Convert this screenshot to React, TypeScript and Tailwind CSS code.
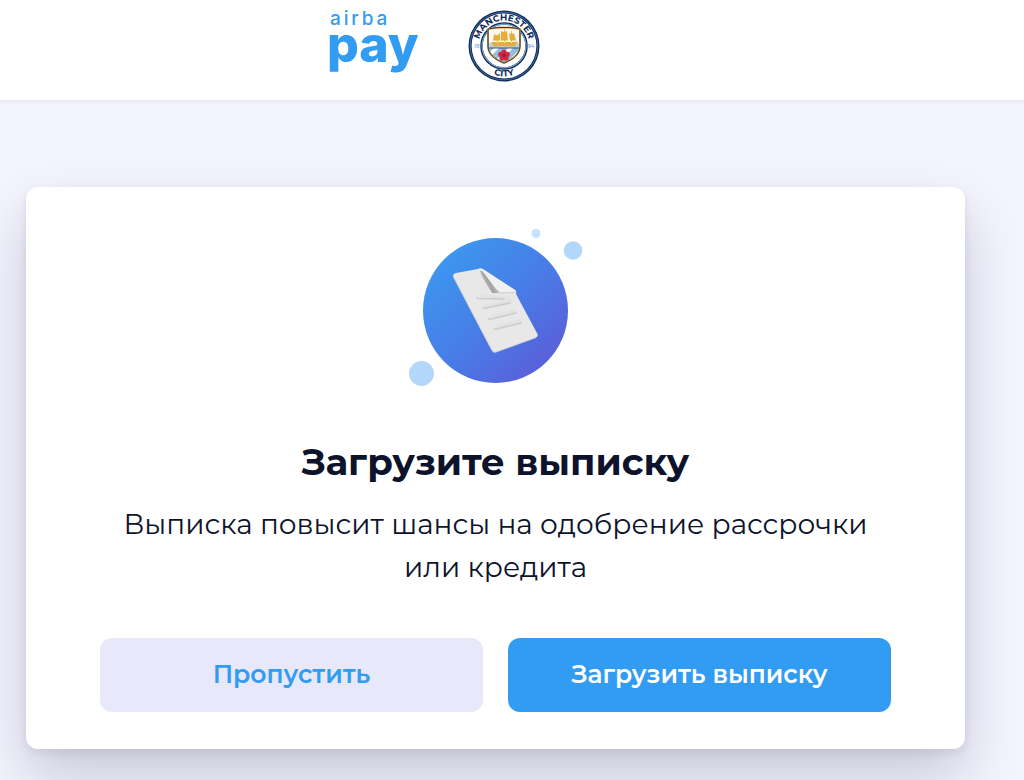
import type { ReactNode } from "react";

const shield = "M24 24q8-2 16-1.500q8-.5 16 1.500v17c0 8-6 13-16 17c-10-4-16-9-16-17z";

function AirbaPayLogo() {
  return (
    <div className="w-[94px] font-['Inter',sans-serif] text-[#329bf2]" role="img" aria-label="airba pay">
      <div className="text-[19px] leading-[18px] font-medium tracking-[0.15em]">airba</div>
      <div className="-ml-[3px] text-[50px] leading-[32px] font-extrabold">pay</div>
    </div>
  );
}

function ClubCrest() {
  return (
    <svg viewBox="4 5 72 72" className="size-[72px]" role="img" aria-label="Manchester City">
      <defs>
        <path id="crest-top" d="M14.500 41A25.500 25.500 0 1 1 65.500 41" />
        <path id="crest-bottom" d="M9.500 41A30.500 30.500 0 0 0 70.500 41" />
        <clipPath id="crest-shield">
          <path d={shield} />
        </clipPath>
      </defs>
      <circle cx="40" cy="41" r="35.500" fill="#0f2b5b" />
      <circle cx="40" cy="41" r="33.800" fill="none" stroke="#5585bb" strokeWidth="0.700" />
      <circle cx="40" cy="41" r="32.400" fill="#fff" />
      <circle cx="40" cy="41" r="22.500" fill="#fff" stroke="#0f2b5b" strokeWidth="2.500" />
      <circle cx="40" cy="41" r="22" fill="none" stroke="#8dbbe3" strokeWidth="1" />
      <g clipPath="url(#crest-shield)">
        <rect x="22" y="20" width="36" height="23" fill="#fbf8ef" />
        <rect x="22" y="38" width="36" height="5" fill="#b5d5ee" />
        <rect x="22" y="43" width="36" height="18" fill="#8fbfe6" />
        <path d="M22 51l8-8h5L22 56zM28 59l16-16h5L32 60zM38 62l20-20v6L42 64z" fill="#fff" />
        <path d="M22 43h36" stroke="#0f2b5b" strokeWidth="0.800" />
        <path
          d="M27 37l3 4h21l3-4.500-5 .5H31zM30 29q3 3 6-1v7.500h-7zM37 26q3 2 6 0l1 9.500h-7.500zM45 28q3 2 5 0l2 7.500h-6zM33 35h1v3h-1zM40 24h.8v14H40zM47 26h.8v12H47z"
          fill="#e5ae3c"
        />
        <path d="M28 41h24" stroke="#e5ae3c" strokeWidth="0.800" />
      </g>
      <path d={shield} fill="none" stroke="#d9a741" strokeWidth="2" />
      <path d={shield} fill="none" stroke="#0f2b5b" strokeWidth="0.900" />
      <g fill="#d22640">
        <circle cx="40" cy="47" r="2.600" />
        <circle cx="43.300" cy="49.400" r="2.600" />
        <circle cx="42" cy="53" r="2.600" />
        <circle cx="38" cy="53" r="2.600" />
        <circle cx="36.700" cy="49.400" r="2.600" />
      </g>
      <circle cx="40" cy="50.300" r="1.800" fill="#a01c36" />
      <g fill="#0f2b5b" textAnchor="middle" className="font-['Montserrat',sans-serif] text-[9px] font-bold">
        <text>
          <textPath href="#crest-top" startOffset="50%">
            MANCHESTER
          </textPath>
        </text>
        <text>
          <textPath href="#crest-bottom" startOffset="50%">
            CITY
          </textPath>
        </text>
      </g>
      <g fill="#7fb0dc" textAnchor="middle" className="font-['Montserrat',sans-serif] text-[5px] font-semibold">
        <text x="13" y="43">
          18
        </text>
        <text x="67" y="43">
          94
        </text>
      </g>
    </svg>
  );
}

function DocumentIllustration() {
  return (
    <svg viewBox="0 0 191 172" className="h-[172px] w-[191px]" aria-hidden="true">
      <defs>
        <linearGradient id="disc" x1="0.1" y1="0.2" x2="0.85" y2="0.95">
          <stop offset="0" stopColor="#3d95ee" />
          <stop offset="0.5" stopColor="#487ce6" />
          <stop offset="1" stopColor="#5c5cd9" />
        </linearGradient>
        <linearGradient id="fold" x1="80" y1="62" x2="94" y2="55" gradientUnits="userSpaceOnUse">
          <stop offset="0" stopColor="#e4e4e4" />
          <stop offset="0.6" stopColor="#a2a2a2" />
          <stop offset="1" stopColor="#c4c4c4" />
        </linearGradient>
        <filter id="soft">
          <feGaussianBlur stdDeviation="0.6" />
        </filter>
        <filter id="softer" x="-20%" y="-50%" width="140%" height="200%">
          <feGaussianBlur stdDeviation="0.9" />
        </filter>
      </defs>
      <circle cx="95.500" cy="86.500" r="72.500" fill="url(#disc)" />
      <circle cx="136" cy="9.500" r="4.500" fill="#c5e3ff" />
      <circle cx="173" cy="26.500" r="9.300" fill="#b3d7fb" />
      <circle cx="21.500" cy="149.500" r="12.500" fill="#b3d7fb" />
      <path
        d="M56 49L78 45q2-1.500 4 0L115 66q2 1.500 1 4L137.500 110q1 2.500-1.500 3.500L96 128q-2.500 1-4-1.500L53.500 53q-1.500-3 2.500-4z"
        fill="#e8e8e8"
      />
      <path d="M53.500 53L92 126.500q1.500 2.500 4 1.500L136 113.500" fill="none" stroke="#d3d3d6" />
      <path d="M80 47q1 4 4 9L92 69h8L83 47z" fill="url(#fold)" filter="url(#soft)" />
      <path d="M79 45q2-1 4 0L115 66q2 1.500 0 2.500L101 68q-3-.5-5-3L84 49q-2-3-5-4z" fill="#f0f0f0" />
      <path d="M100 69l16-.5" stroke="#cdcdcd" fill="none" />
      <g fill="none" stroke="#e0e0e0" strokeWidth="3" filter="url(#softer)">
        <path d="M80 72L110 74" />
        <path d="M86 82L112 77" />
        <path d="M91 93L117 87" />
        <path d="M97 103L122 97" />
      </g>
      <g fill="none" stroke="#cbcbcb" strokeWidth="1.300" strokeLinecap="round" filter="url(#soft)">
        <path d="M77 73.500l1 1L104 75" />
        <path d="M83 83.500l1 1L110 79" />
        <path d="M88.500 94.500l1 1L116 89" />
        <path d="M94 104.500l1 1L121 99" />
      </g>
    </svg>
  );
}

function ActionButton({ className, children }: { className: string; children: ReactNode }) {
  return (
    <button type="button" className={`h-[74px] flex-1 rounded-xl text-[25px] font-semibold ${className}`}>
      {children}
    </button>
  );
}

export default function App() {
  return (
    <div className="min-h-screen overflow-hidden bg-[#f3f4fd] font-['Montserrat',sans-serif] text-[#0d132b]">
      <header className="flex h-[100px] items-start gap-11 bg-white pt-[10px] pl-[330px] shadow-[0_2px_4px_rgba(20,20,60,0.05)]">
        <AirbaPayLogo />
        <ClubCrest />
      </header>

      <main className="pt-[87px] pr-[59px] pb-8 pl-[26px]">
        <section className="flex flex-col items-center rounded-xl bg-white px-[74px] py-[37px] shadow-[0_4px_8px_rgba(20,20,60,0.08),0_28px_56px_rgba(20,20,60,0.19)]">
          <DocumentIllustration />
          <h1 className="mt-[42px] text-[37px] leading-[48px] font-bold">Загрузите выписку</h1>
          <p className="mt-[17px] text-center text-[28px] leading-[43px]">
            Выписка повысит шансы на одобрение рассрочки или кредита
          </p>
          <div className="mt-[49px] flex gap-[25px] self-stretch">
            <ActionButton className="bg-[#e7e8fa] text-[#329bf2]">Пропустить</ActionButton>
            <ActionButton className="bg-[#329bf2] text-white">Загрузить выписку</ActionButton>
          </div>
        </section>
      </main>
    </div>
  );
}
